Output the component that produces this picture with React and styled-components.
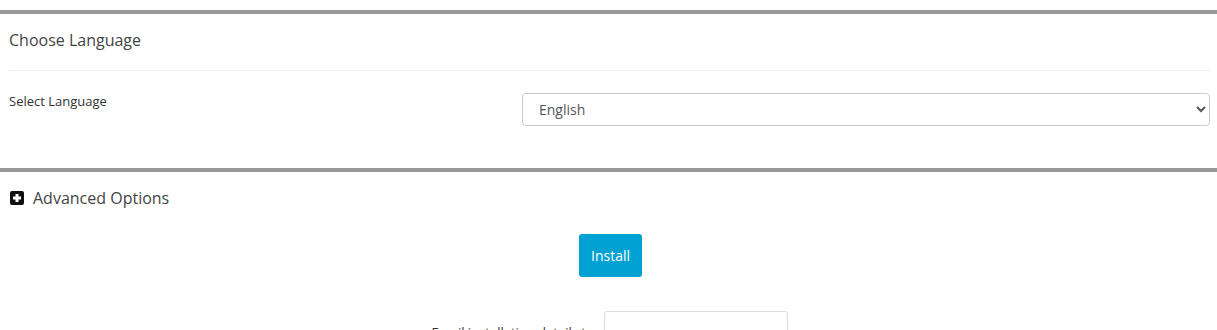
import React from "react";
import styled, { createGlobalStyle } from "styled-components";

const GlobalStyle = createGlobalStyle`
  body {
    margin: 0;
    background: #fff;
    font-family: "Open Sans", "Liberation Sans", sans-serif;
    color: #333;
  }
`;

const Page = styled.div`
  padding-top: 10px;
  width: 1217px;
`;

const Section = styled.section`
  border-top: 4px solid #999;
  padding: 0 7px 0 9px;
`;

const Title = styled.h3`
  margin: 0;
  padding: 15px 0 19px;
  font-size: 16px;
  font-weight: 400;
  line-height: 22px;
  color: #444;
  border-bottom: 1px solid #eee;
`;

const Row = styled.div`
  display: grid;
  grid-template-columns: 513px 1fr;
  align-items: start;
  padding: 21px 0 42px;
`;

const Label = styled.label`
  font-size: 13px;
  font-weight: 500;
  line-height: 18px;
  color: #333;
`;

const Select = styled.select`
  height: 33px;
  width: 100%;
  border: 1px solid #ccc;
  border-radius: 4px;
  background: #fff;
  padding: 0 12px;
  font-family: "Open Sans", "Liberation Sans", sans-serif;
  font-size: 14px;
  color: #555;
  margin-top: 1px;
`;

const Toggle = styled.div`
  display: flex;
  align-items: center;
  gap: 9px;
  padding: 15px 0 0 1px;
  font-size: 16px;
  line-height: 22px;
  color: #444;
`;

const PlusBox = styled.span`
  width: 14px;
  height: 14px;
  border-radius: 2px;
  background: #111;
  display: inline-flex;
  align-items: center;
  justify-content: center;
`;

const Actions = styled.div`
  display: flex;
  flex-direction: column;
  align-items: center;
  padding-top: 25px;
`;

const InstallButton = styled.button`
  height: 43px;
  padding: 0 12px;
  background: #00a1d3;
  border: none;
  border-radius: 3px;
  color: #fff;
  font-family: "Open Sans", "Liberation Sans", sans-serif;
  font-size: 14px;
  margin-left: 2px;
`;

const EmailRow = styled.div`
  display: flex;
  align-items: flex-end;
  gap: 3px;
  margin-top: 34px;
  font-size: 13px;
  font-weight: 500;
  color: #333;
`;

const EmailInput = styled.input`
  width: 184px;
  height: 30px;
  border: 1px solid #ddd;
  border-radius: 3px;
  box-sizing: border-box;
`;

export default function App() {
  return (
    <Page>
      <GlobalStyle />
      <Section>
        <Title>Choose Language</Title>
        <Row>
          <Label>Select Language</Label>
          <Select defaultValue="en">
            <option value="en">English</option>
          </Select>
        </Row>
      </Section>
      <Section>
        <Toggle>
          <PlusBox>
            <svg width="10" height="10" viewBox="0 0 10 10">
              <path d="M3.5 1h3v2.5H9v3H6.5V9h-3V6.5H1v-3h2.5z" fill="#fff" />
            </svg>
          </PlusBox>
          Advanced Options
        </Toggle>
        <Actions>
          <InstallButton>Install</InstallButton>
          <EmailRow>
            <span>Email installation details to :</span>
            <EmailInput type="text" />
          </EmailRow>
        </Actions>
      </Section>
    </Page>
  );
}
